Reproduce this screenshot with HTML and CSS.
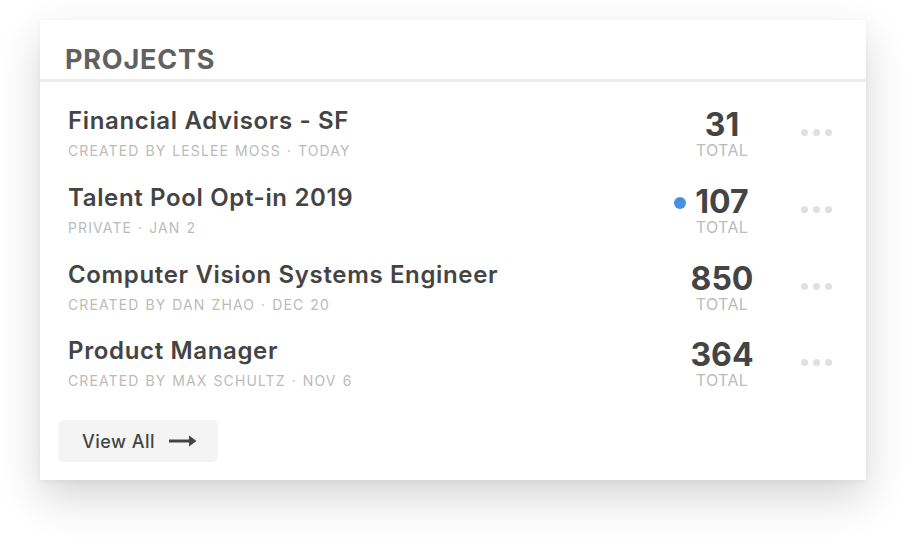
FILE: index.html
```html
<!DOCTYPE html>
<html>
<head>
<meta charset="utf-8">
<link rel="stylesheet" href="styles.css">
</head>
<body>
<div class="card">
  <div class="card-header">PROJECTS</div>
  <div class="rows">
    <div class="row">
      <div class="info">
        <div class="title">Financial Advisors - SF</div>
        <div class="meta">CREATED BY LESLEE MOSS · TODAY</div>
      </div>
      <div class="count"><span class="num">31</span><span class="label">TOTAL</span></div>
      <div class="more"><i></i><i></i><i></i></div>
    </div>
    <div class="row">
      <div class="info">
        <div class="title">Talent Pool Opt-in 2019</div>
        <div class="meta">PRIVATE · JAN 2</div>
      </div>
      <div class="count"><span class="num"><span class="badge"></span>107</span><span class="label">TOTAL</span></div>
      <div class="more"><i></i><i></i><i></i></div>
    </div>
    <div class="row">
      <div class="info">
        <div class="title">Computer Vision Systems Engineer</div>
        <div class="meta">CREATED BY DAN ZHAO · DEC 20</div>
      </div>
      <div class="count"><span class="num">850</span><span class="label">TOTAL</span></div>
      <div class="more"><i></i><i></i><i></i></div>
    </div>
    <div class="row">
      <div class="info">
        <div class="title">Product Manager</div>
        <div class="meta">CREATED BY MAX SCHULTZ · NOV 6</div>
      </div>
      <div class="count"><span class="num">364</span><span class="label">TOTAL</span></div>
      <div class="more"><i></i><i></i><i></i></div>
    </div>
  </div>
  <div class="footer">
    <button class="view-all">View All
      <svg width="28" height="12" viewBox="0 0 28 12"><path d="M0 6H22" stroke="#444" stroke-width="3"/><path d="M20 0.5L27.5 6L20 11.5Z" fill="#444"/></svg>
    </button>
  </div>
</div>
</body>
</html>
```

FILE: styles.css
```css
* { box-sizing: border-box; }
html, body { margin: 0; padding: 0; background: #fff; }
body {
  width: 908px;
  height: 540px;
  padding: 20px 42px 0 40px;
  font-family: Inter, "Noto Sans", sans-serif;
  overflow: hidden;
}
.card {
  width: 826px;
  height: 460px;
  background: #fff;
  box-shadow: 0 18px 40px rgba(0,0,0,0.16), 0 2px 6px rgba(0,0,0,0.05);
  display: flex;
  flex-direction: column;
}
.card-header {
  height: 62px;
  padding: 25px 0 0 25px;
  font-size: 27px;
  line-height: 30px;
  font-weight: 700;
  color: #616161;
  letter-spacing: 0.8px;
  border-bottom: 3px solid #ececec;
}
.rows { padding-top: 12px; }
.row {
  height: 77px;
  display: flex;
  align-items: center;
  padding: 0 34px 0 28px;
}
.row:last-child { height: 75px; }
.info { flex: 1; }
.title {
  font-size: 24px;
  line-height: 30px;
  font-weight: 600;
  color: #444;
  letter-spacing: 0.65px;
}
.meta {
  margin-top: 6px;
  font-size: 14px;
  line-height: 18px;
  color: #bbb;
  letter-spacing: 1.1px;
  word-spacing: 1px;
}
.count {
  width: 100px;
  display: flex;
  flex-direction: column;
  align-items: center;
  margin-right: 29px;
}
.num {
  position: relative;
  font-size: 32px;
  line-height: 34px;
  font-weight: 700;
  color: #444;
}
.badge {
  position: absolute;
  left: -21px;
  top: 12px;
  width: 12px;
  height: 12px;
  border-radius: 50%;
  background: #4a90e2;
}
.label {
  font-size: 16px;
  line-height: 16px;
  color: #bbb;
  letter-spacing: 0.4px;
}
.more {
  display: flex;
  gap: 5px;
  margin-top: 0;
}
.more i {
  width: 7px;
  height: 7px;
  border-radius: 50%;
  background: #e0e0e0;
}
.footer { padding: 20px 0 0 18px; }
.view-all {
  width: 160px;
  height: 42px;
  border: none;
  border-radius: 6px;
  background: #f4f4f4;
  display: flex;
  align-items: center;
  gap: 14px;
  padding: 0 0 0 24px;
  font-family: inherit;
  font-size: 18px;
  font-weight: 500;
  color: #444;
  letter-spacing: 0.5px;
}
```
